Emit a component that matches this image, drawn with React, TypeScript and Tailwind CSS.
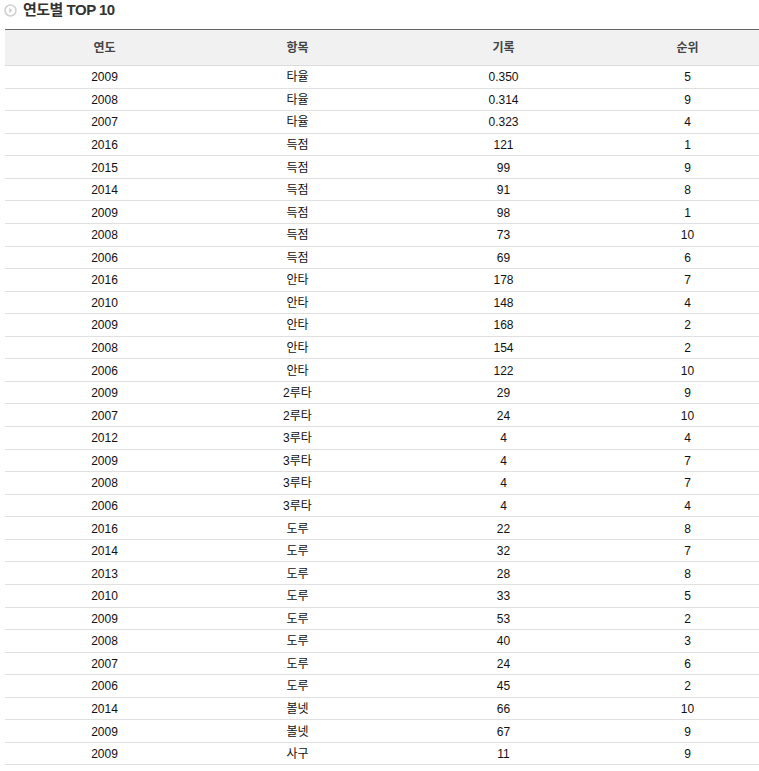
import React from "react";

const rows: [string, string, string, string][] = [
  ["2009", "타율", "0.350", "5"],
  ["2008", "타율", "0.314", "9"],
  ["2007", "타율", "0.323", "4"],
  ["2016", "득점", "121", "1"],
  ["2015", "득점", "99", "9"],
  ["2014", "득점", "91", "8"],
  ["2009", "득점", "98", "1"],
  ["2008", "득점", "73", "10"],
  ["2006", "득점", "69", "6"],
  ["2016", "안타", "178", "7"],
  ["2010", "안타", "148", "4"],
  ["2009", "안타", "168", "2"],
  ["2008", "안타", "154", "2"],
  ["2006", "안타", "122", "10"],
  ["2009", "2루타", "29", "9"],
  ["2007", "2루타", "24", "10"],
  ["2012", "3루타", "4", "4"],
  ["2009", "3루타", "4", "7"],
  ["2008", "3루타", "4", "7"],
  ["2006", "3루타", "4", "4"],
  ["2016", "도루", "22", "8"],
  ["2014", "도루", "32", "7"],
  ["2013", "도루", "28", "8"],
  ["2010", "도루", "33", "5"],
  ["2009", "도루", "53", "2"],
  ["2008", "도루", "40", "3"],
  ["2007", "도루", "24", "6"],
  ["2006", "도루", "45", "2"],
  ["2014", "볼넷", "66", "10"],
  ["2009", "볼넷", "67", "9"],
  ["2009", "사구", "11", "9"],
];

export default function App() {
  return (
    <div
      className="w-[759px] bg-white text-[#111]"
      style={{ fontFamily: '"Liberation Sans", "Noto Sans CJK KR", sans-serif' }}
    >
      <div className="flex items-center h-[20px] pl-[4px] gap-[6px]">
        <svg width="13" height="13" viewBox="0 0 13 13">
          <circle cx="6.5" cy="6.5" r="5.5" fill="none" stroke="#cfcfcf" strokeWidth="1.5" />
          <path d="M5.2 4 L8.4 6.5 L5.2 9 Z" fill="#cfcfcf" />
        </svg>
        <span className="text-[15px] font-bold text-[#333] tracking-[-0.5px]">연도별 TOP 10</span>
      </div>
      <div className="pl-[5px] pt-[9px]">
        <table className="w-[754px] border-collapse table-fixed text-[12px]">
          <colgroup>
            <col className="w-[199px]" />
            <col className="w-[187px]" />
            <col className="w-[225px]" />
            <col className="w-[143px]" />
          </colgroup>
          <thead>
            <tr className="h-[36px] bg-[#f1f1f1] border-t border-t-[#666] border-b border-b-[#dcdcdc]">
              <th className="font-bold text-[#444] text-center p-0">연도</th>
              <th className="font-bold text-[#444] text-center p-0">항목</th>
              <th className="font-bold text-[#444] text-center p-0">기록</th>
              <th className="font-bold text-[#444] text-center p-0">순위</th>
            </tr>
          </thead>
          <tbody>
            {rows.map((r, i) => (
              <tr key={i} className="h-[22.57px] border-b border-b-[#e0e0e0]">
                {r.map((c, j) => (
                  <td key={j} className="text-center p-0 pt-[2px] leading-[19px]">
                    {c}
                  </td>
                ))}
              </tr>
            ))}
          </tbody>
        </table>
      </div>
    </div>
  );
}
